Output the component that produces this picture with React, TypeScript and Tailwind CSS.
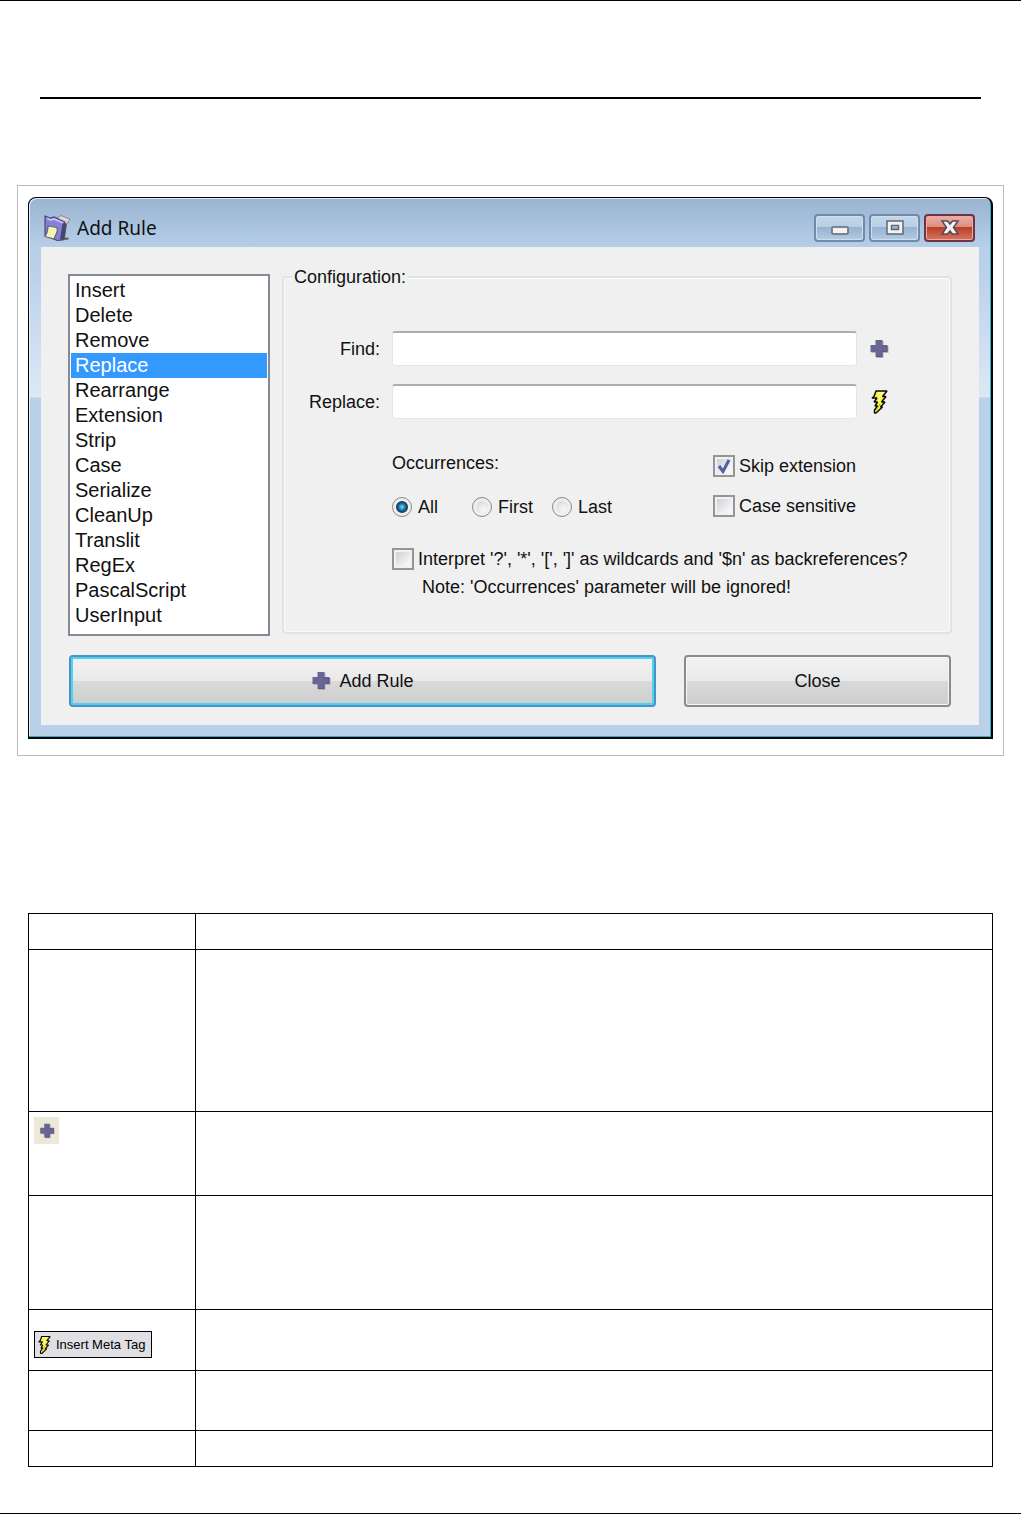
import type { ReactNode } from "react";

const RULES = [
  "Insert", "Delete", "Remove", "Replace", "Rearrange", "Extension", "Strip",
  "Case", "Serialize", "CleanUp", "Translit", "RegEx", "PascalScript", "UserInput",
];

function PlusIcon({ className = "" }: { className?: string }) {
  return (
    <svg viewBox="0 0 20 20" className={className} aria-hidden="true">
      <path d="M7.500 2h7v5h5v7h-5v5h-7v-5h-5V7h5z" fill="#b9aeb6" />
      <path d="M6.500 1h7v5h5v7h-5v5h-7v-5h-5V6h5z" fill="#686693" />
      <path d="M13 7h5v5.500h-5v5H8" fill="none" stroke="#5a5787" strokeWidth="1" />
    </svg>
  );
}

function BoltIcon({ className = "" }: { className?: string }) {
  return (
    <svg viewBox="0 0 20 26" className={className} aria-hidden="true">
      <path
        d="M7 2H18l-4.500 5.500h3.500L12.500 13h3.500L11.500 18h2L7 24H5.500v-3l3-4H6l2.500-4H5l3-4H3l2-1.500z"
        fill="#f7f34a"
        stroke="#0a0a00"
        strokeWidth="1.500"
        strokeLinejoin="bevel"
      />
      <path d="M9 4h5l-4 4 1 1-1.500 4" fill="none" stroke="#fffcb0" strokeWidth="1.300" />
      <path d="M11 15l-4 6" fill="none" stroke="#a8a21c" strokeWidth="1" />
    </svg>
  );
}

function AppIcon() {
  return (
    <svg viewBox="0 0 28 28" className="h-7 w-7" aria-hidden="true">
      <path d="M14 4l4-2.500 9 3.500-3 5-9-2z" fill="#e0d7d2" stroke="#8d8890" strokeWidth="1" />
      <path d="M23 10l-2 15 4.500-.500" fill="none" stroke="#55535c" strokeWidth="1.800" />
      <path d="M2 2l5 2 4-1 11 5-2 18-6 .5L2 21z" fill="#8380d8" stroke="#4b487f" strokeWidth="1.200" />
      <path d="M4 4.500l4 1.500 3-1 9 4" stroke="#c4c2fb" strokeWidth="1.800" fill="none" />
      <path d="M19.500 9.500L17 25.500l3.500.500L22.500 9z" fill="#474373" />
      <path d="M5 12l9 1.500c1 3 0 5-3 11.500L2 22.500c2-3 3-6 3-10.500z" fill="#f5f3b4" stroke="#66637a" strokeWidth="1.200" />
    </svg>
  );
}

function CaptionButton({ label, close = false, children }: { label: string; close?: boolean; children: ReactNode }) {
  return (
    <button
      type="button"
      aria-label={label}
      className={
        "flex h-7 w-[51px] items-center justify-center rounded border-2 " +
        (close
          ? "border-[#6d3545] bg-[linear-gradient(#eab0a6,#dc8d80_45%,#b83d25_46%,#d87561)] shadow-[inset_0_0_0_1px_#e9aaa0]"
          : "border-[#7189aa] bg-[linear-gradient(#c4d7e9,#b9cfe4_45%,#96b2cf_46%,#b4cce4)] shadow-[inset_0_0_0_1px_#cfdfee]")
      }
    >
      <svg viewBox="0 0 20 18" className="h-[18px] w-5" aria-hidden="true">
        {children}
      </svg>
    </button>
  );
}

function Check({ label, checked = false }: { label: string; checked?: boolean }) {
  return (
    <label className="flex items-center gap-1 whitespace-nowrap">
      <span className="relative flex h-[22px] w-[22px] shrink-0">
        <input
          type="checkbox"
          defaultChecked={checked}
          className="peer h-full w-full appearance-none border-2 border-[#959595] bg-[linear-gradient(135deg,#c6cad2,#f5f5f6_75%)] shadow-[inset_0_0_0_2px_#f1f1f1]"
        />
        <svg viewBox="0 0 22 22" className="pointer-events-none absolute inset-0 hidden peer-checked:block" aria-hidden="true">
          <path d="M6 11l4 5.500L16 5" fill="none" stroke="#4c60a2" strokeWidth="3" />
        </svg>
      </span>
      {label}
    </label>
  );
}

function Radio({ label, checked = false }: { label: string; checked?: boolean }) {
  return (
    <label className="flex w-20 items-center gap-1.5">
      <input
        type="radio"
        name="occurrences"
        defaultChecked={checked}
        className="h-5 w-5 shrink-0 appearance-none rounded-full border border-[#8b8b8b] bg-[radial-gradient(circle_at_60%_65%,#f8f8f8,#c5c9d0)] shadow-[inset_0_0_0_3px_#efefef] checked:bg-[radial-gradient(circle_at_50%_50%,#8fdcf8_0,#2d9ed0_2px,#123d63_5px,#1c3e5c_6px,#d9dde2_7px)]"
      />
      {label}
    </label>
  );
}

function AddRuleWindow() {
  const field =
    "h-[35px] w-full min-w-0 rounded-[3px] border border-[#e2e6ee] border-t-2 border-t-[#abadb3] bg-white px-2 outline-none";
  return (
    <section
      aria-label="Add Rule"
      className="rounded-t-lg border border-black border-b-2 border-r-2 bg-[linear-gradient(#99b4d1,#b7cfe9_50px,#bcd2ec_80px,#dce8f5_199px,#b9d1ea_200px)] px-3 pb-3 font-['Liberation_Sans',sans-serif] text-[18px] leading-6 text-[#111] shadow-[inset_-1px_-1px_0_#25b5c8,inset_1px_1px_0_#e5eff8]"
    >
      <header className="flex h-[49px] items-start justify-between pt-4">
        <h1 className="flex items-center gap-1.5 pl-0.5 font-['Noto_Sans',sans-serif] text-[19px] leading-7">
          <AppIcon />
          Add Rule
        </h1>
        <div className="flex gap-1 pr-1">
          <CaptionButton label="Minimize">
            <rect x="2" y="8" width="16" height="7" rx="1" fill="#f2f2f2" stroke="#5e6878" strokeWidth="1.500" />
          </CaptionButton>
          <CaptionButton label="Maximize">
            <path d="M2 2h16v13H2zM6.500 6.500v4h7v-4z" fillRule="evenodd" fill="#f2f2f2" stroke="#5e6878" strokeWidth="1.500" />
          </CaptionButton>
          <CaptionButton label="Close window" close>
            <path
              d="M2 2h5.500L10 5l2.500-3H18L13.500 8.500 18 15h-5.500L10 12l-2.500 3H2l4.500-6.500z"
              fill="#f3f3f3"
              stroke="#57495a"
              strokeWidth="1.500"
            />
          </CaptionButton>
        </div>
      </header>

      <div className="bg-[#f0f0f0] px-[27px] pt-[18px] pb-[18px]">
        <div className="flex gap-3">
          <ul
            role="listbox"
            aria-label="Rules"
            className="mt-[9px] w-[202px] shrink-0 border-2 border-[#868a94] bg-white px-px pt-0.5 pb-1.5 text-[20px] leading-[25px]"
          >
            {RULES.map((rule) => (
              <li
                key={rule}
                role="option"
                aria-selected={rule === "Replace"}
                className="px-1 aria-selected:bg-[#3399ff] aria-selected:text-white"
              >
                {rule}
              </li>
            ))}
          </ul>

          <fieldset className="mb-0.5 min-w-0 flex-1 rounded border-2 border-[#dbe4e9] shadow-[inset_0_0_0_1px_#fafafa]">
            <legend className="ml-2 bg-[#f0f0f0] px-0.5">Configuration:</legend>
            <div className="grid grid-cols-[96px_1fr_20px] items-center gap-x-3 gap-y-[18px] pt-[42px] pr-[61px]">
              <label htmlFor="find" className="text-right">Find:</label>
              <input id="find" className={field} />
              <button type="button" aria-label="Add item">
                <PlusIcon className="h-5 w-5" />
              </button>
              <label htmlFor="replace" className="text-right">Replace:</label>
              <input id="replace" className={field} />
              <button type="button" aria-label="Insert meta tag">
                <BoltIcon className="h-[26px] w-5" />
              </button>
            </div>
            <div className="pl-[108px]">
              <div className="mt-8 flex justify-between">
                <div role="radiogroup" aria-labelledby="occ">
                  <p id="occ">Occurrences:</p>
                  <div className="mt-5 flex">
                    <Radio label="All" checked />
                    <Radio label="First" />
                    <Radio label="Last" />
                  </div>
                </div>
                <div className="flex w-[237px] flex-col gap-4 pt-[3px]">
                  <Check label="Skip extension" checked />
                  <Check label="Case sensitive" />
                </div>
              </div>
              <div className="mt-7">
                <Check label="Interpret '?', '*', '[', ']' as wildcards and '$n' as backreferences?" />
                <p className="mt-1 pl-[30px]">Note: 'Occurrences' parameter will be ignored!</p>
              </div>
            </div>
          </fieldset>
        </div>

        <div className="mt-[19px] flex gap-7 px-px">
          <button
            type="button"
            className="flex h-[52px] flex-1 items-center justify-center gap-2 rounded border-2 border-[#4a93c3] bg-[linear-gradient(#f2f2f2,#e9e9e9_49%,#dadada_50%,#cdcdcd)] shadow-[inset_0_0_0_2px_#4bd2f5]"
          >
            <PlusIcon className="h-5 w-5" />
            Add Rule
          </button>
          <button
            type="button"
            className="h-[52px] w-[267px] rounded border-2 border-[#8b8b8b] bg-[linear-gradient(#f2f2f2,#e9e9e9_49%,#dadada_50%,#cdcdcd)] shadow-[inset_0_0_0_1px_#f8f8f8]"
          >
            Close
          </button>
        </div>
      </div>
    </section>
  );
}

function Row({ height, children }: { height: string; children?: ReactNode }) {
  return (
    <tr className={height}>
      <td className="border border-black px-[5px] py-[5px] align-top">{children}</td>
      <td className="border border-black" />
    </tr>
  );
}

export default function App() {
  return (
    <main className="border-y border-black bg-white">
      <hr className="mx-10 mt-24 border-t-2 border-black" />
      <div className="mx-[17px] mt-[86px] border border-[#bbb] px-2.5 pt-[11px] pb-4">
        <AddRuleWindow />
      </div>
      <table className="mx-7 mt-[157px] mb-[46px] w-[calc(100%-56px)] table-fixed border-collapse">
        <colgroup>
          <col className="w-[167px]" />
          <col />
        </colgroup>
        <tbody>
          <Row height="h-9" />
          <Row height="h-[162px]" />
          <Row height="h-[84px]">
            <button type="button" aria-label="Add" className="flex h-[27px] w-[25px] items-center justify-center bg-[#ece9d8]">
              <PlusIcon className="h-4 w-4" />
            </button>
          </Row>
          <Row height="h-[114px]" />
          <Row height="h-[61px]">
            <button
              type="button"
              className="mt-4 flex h-[27px] w-[118px] items-center gap-1 border border-black bg-[#e0dfe3] pl-px font-['Liberation_Sans',sans-serif] text-[13px] leading-5 whitespace-nowrap text-black"
            >
              <BoltIcon className="h-5 w-4 shrink-0" />
              Insert Meta Tag
            </button>
          </Row>
          <Row height="h-[60px]" />
          <Row height="h-9" />
        </tbody>
      </table>
    </main>
  );
}
